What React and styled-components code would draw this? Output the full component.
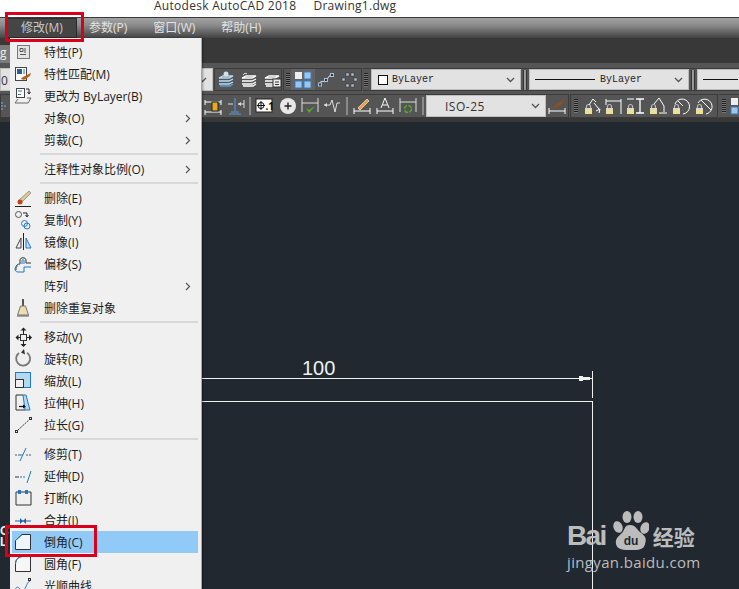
import React from "react";
import styled, { createGlobalStyle } from "styled-components";

const UI_FONT = `"Open Sans", "Noto Sans CJK SC", sans-serif`;

const GlobalStyle = createGlobalStyle`
  html, body {
    margin: 0;
    padding: 0;
    background: #212830;
  }
`;

const Page = styled.div`
  position: relative;
  display: flex;
  flex-direction: column;
  width: 739px;
  height: 589px;
  overflow: hidden;
  font-family: ${UI_FONT};
  font-size: 12px;
`;

const TitleBar = styled.div`
  display: flex;
  flex: none;
  gap: 17px;
  height: 17px;
  padding-left: 154px;
  background: #fff;
  border-bottom: 1px solid #3a3a3a;
  color: #333;
  font-size: 12px;
  letter-spacing: 0.28px;
  line-height: 11px;
`;

const MenuBar = styled.div`
  display: flex;
  align-items: center;
  flex: none;
  height: 20px;
  padding-left: 8px;
  background: linear-gradient(#a2a2a2, #8c8c8c 35%, #4e4e4e 90%, #444);
`;

const MenuTitle = styled.div`
  padding: 0 13px;
  height: 18px;
  line-height: 17px;
  box-sizing: border-box;
  color: ${(p) => (p.$active ? "#c8c8c8" : "#e2e2e2")};
  background: ${(p) => (p.$active ? "#454545" : "transparent")};
  outline: ${(p) => (p.$active ? "1px solid #2c2c2c" : "none")};
`;

const TabStrip = styled.div`
  flex: none;
  height: 25px;
  background: #383838;
`;

const Tab = styled.div`
  width: 10px;
  height: 18px;
  margin-top: 7px;
  background: #7b7b7b;
  color: #eee;
  line-height: 16px;
  overflow: hidden;
`;

const ToolRow = styled.div`
  display: flex;
  flex: none;
  gap: 1px;
  height: ${(p) => p.$h}px;
  padding: ${(p) => p.$top}px 0 ${(p) => p.$bottom}px;
  background: #555;
`;

const Panel = styled.div`
  display: flex;
  align-items: center;
  flex: none;
  box-sizing: border-box;
  width: ${(p) => p.$w}px;
  height: 100%;
  border: 1px solid #3b3b3b;
  border-left-width: ${(p) => (p.$open ? 0 : 1)}px;
  background: #555;
`;

const Grip = styled.div`
  flex: none;
  width: 4px;
  height: 14px;
  margin: 0 ${(p) => p.$after ?? 4}px 0 ${(p) => p.$before ?? 3}px;
  background: repeating-linear-gradient(#1f1f1f 0 1px, #777 1px 2px);
`;

const Slot = styled.div`
  display: flex;
  align-items: center;
  justify-content: center;
  flex: none;
  width: ${(p) => p.$w}px;
  height: 100%;
  background: ${(p) => (p.$lit ? "#636363" : "transparent")};
`;

const ToolSep = styled.div`
  flex: none;
  width: 2px;
  height: 18px;
  margin: 0 2px;
  background: #8a8a8a;
`;

const DragBar = styled.div`
  flex: none;
  width: 2px;
  height: 20px;
  margin: 0 2px;
  border: 0 solid #333;
  border-width: 0 1px;
  background: #999;
`;

const Combo = styled.div`
  display: flex;
  align-items: center;
  flex: none;
  box-sizing: border-box;
  width: ${(p) => p.$w}px;
  height: 100%;
  padding: 0 5px 0 ${(p) => p.$pad ?? 5}px;
  border: 1px solid #bdbdbd;
  background: #e2e2e2;
  color: #222;
  overflow: hidden;
`;

const ComboLabel = styled.span`
  flex: 1;
  font-family: "Liberation Mono", monospace;
  font-size: 10px;
  white-space: nowrap;
`;

const ComboPlain = styled.span`
  flex: 1;
  padding-top: 1px;
  color: #333;
  font-size: 12px;
  letter-spacing: 0.5px;
  white-space: nowrap;
`;

const Swatch = styled.span`
  flex: none;
  box-sizing: border-box;
  width: 10px;
  height: 10px;
  margin-right: 4px;
  border: 1px solid #111;
  background: #fff;
`;

const LineSample = styled.span`
  flex: none;
  width: ${(p) => p.$w}px;
  height: 1px;
  margin-right: 5px;
  background: #111;
`;

const Canvas = styled.div`
  position: relative;
  flex: 1;
  border-top: 4px solid #383838;
  background: #212830;
`;

const DrawLine = styled.div`
  position: absolute;
  left: ${(p) => p.$x}px;
  top: ${(p) => p.$y - 122}px;
  width: ${(p) => p.$w}px;
  height: ${(p) => p.$h}px;
  background: #eef0f1;
`;

const DimText = styled.div`
  position: absolute;
  left: 302px;
  top: 236px;
  color: #eef0f1;
  font-family: "Liberation Sans", sans-serif;
  font-size: 20px;
  line-height: 20px;
`;

const SideGlyph = styled.div`
  position: absolute;
  left: 0;
  top: 404px;
  color: #eee;
  font-family: "Liberation Sans", sans-serif;
  font-size: 12px;
  font-weight: 700;
  line-height: 11px;
`;

const Watermark = styled.div`
  position: absolute;
  left: 567px;
  top: 386px;
  color: #bcbcbc;
`;

const LogoRow = styled.div`
  display: flex;
  align-items: flex-end;
  height: 46px;
`;

const LogoBai = styled.span`
  font-family: "Liberation Sans", sans-serif;
  font-size: 28px;
  font-weight: 700;
  letter-spacing: -1.6px;
  line-height: 30px;
  margin-bottom: 3px;
`;

const LogoCn = styled.span`
  margin: 0 0 6px 4px;
  font-family: "Noto Sans CJK SC", sans-serif;
  font-size: 21px;
  font-weight: 700;
  line-height: 24px;
`;

const LogoUrl = styled.div`
  font-size: 15px;
  letter-spacing: 0.35px;
  line-height: 18px;
  margin-top: -1px;
`;

const Menu = styled.div`
  position: absolute;
  left: 10px;
  top: 38px;
  width: 191px;
  height: 560px;
  padding-top: 3px;
  box-sizing: border-box;
  background: #f0f0f0;
  box-shadow: 1px 0 0 #a8a8a8, 2px 0 2px rgba(0, 0, 0, 0.35);
`;

const Row = styled.div`
  display: flex;
  align-items: center;
  height: 22px;
  margin-right: 3px;
  margin-left: 2px;
  color: #1c1c1c;
  background: ${(p) => (p.$active ? "#91c9f7" : "transparent")};
`;

const IconCell = styled.div`
  display: flex;
  flex: none;
  width: 32px;
  margin-left: -1px;
  margin-right: -1px;
`;

const RowLabel = styled.span`
  flex: 1;
  padding-left: 2px;
  white-space: nowrap;
`;

const Separator = styled.div`
  height: 2px;
  margin: 2px 3px 3px 30px;
  background: #d8d8d8;
`;

const Caret = styled.svg`
  flex: none;
  margin-right: 7px;
`;

const RedBox = styled.div`
  position: absolute;
  left: ${(p) => p.$x}px;
  top: ${(p) => p.$y}px;
  width: ${(p) => p.$w}px;
  height: ${(p) => p.$h}px;
  box-sizing: border-box;
  border: 3px solid #d9001b;
`;

/* menu icons are drawn on a 24x22 grid, one per row */
const MI = ({ children }) => (
  <svg width="24" height="22" viewBox="0 0 24 22" fill="none">
    {children}
  </svg>
);

const IconProps = () => (
  <MI>
    <rect x="6.5" y="4.5" width="12" height="13" fill="#e4e4e4" stroke="#777" />
    <path d="M9 7.5h3v3H9zM14 7v5M9 13.5h6" stroke="#555" />
  </MI>
);
const IconMatch = () => (
  <MI>
    <rect x="4.5" y="4.5" width="11" height="13" fill="#fff" stroke="#444" />
    <rect x="6" y="6" width="5" height="5" fill="#2b5d93" />
    <rect x="12" y="6" width="2" height="5" fill="#9bb" />
    <path d="M10 16c2-3 5-3 6-4l4-2-1 3-3 2c-1 2-4 2-6 1z" fill="#b0621c" />
  </MI>
);
const IconChange = () => (
  <MI>
    <rect x="5.5" y="3.5" width="8" height="9" fill="#fff" stroke="#444" />
    <path d="M7 6h4M7 9.5h3" stroke="#2a70b8" />
    <path d="M15 4h3v4M16.5 7l1.5 2 1.5-2" stroke="#222" />
    <path d="M7 14l-3 4h13l3-5h-4" stroke="#666" />
  </MI>
);
const IconErase = () => (
  <MI>
    <path d="M7 14L18 4l2 2-10 10z" fill="#d8c7a5" stroke="#8d7b5c" strokeWidth=".7" />
    <circle cx="9" cy="15" r="2.5" fill="#c0441a" />
    <path d="M4 19.5h16" stroke="#222" />
  </MI>
);
const IconCopy = () => (
  <MI>
    <circle cx="7.5" cy="5.5" r="3" stroke="#555" />
    <path d="M12 4h4v3M14.5 6l1.5 2 1.5-2" stroke="#222" />
    <circle cx="13.5" cy="14.5" r="3" stroke="#1f78c8" />
    <circle cx="16" cy="17" r="3" stroke="#1f78c8" />
  </MI>
);
const IconMirror = () => (
  <MI>
    <path d="M12.5 2v17" stroke="#222" />
    <path d="M10 7v10H5z" stroke="#444" />
    <path d="M15 7v10h5z" fill="#c8e0f4" stroke="#1f78c8" />
  </MI>
);
const IconOffset = () => (
  <MI>
    <path d="M5 17v-3c0-2 2-3 4-3V7c0-3 6-3 6 0v3h5" stroke="#333" fill="none" />
    <path d="M7 19c-4 0-4-6 0-6h0M20 14h-7v5H7M11 11V8c0-2 2-2 2 0v3" stroke="#1f78c8" fill="none" />
  </MI>
);
const IconDup = () => (
  <MI>
    <path d="M11 2h2v7h-2z" fill="#555" />
    <path d="M9.5 9h5l3 9h-11z" fill="#ecdcae" stroke="#777" />
    <path d="M6 19h12" stroke="#555" />
  </MI>
);
const IconMove = () => (
  <MI>
    <rect x="9.5" y="8.5" width="6" height="6" stroke="#333" />
    <path d="M12.5 1.5l-3 3h6zM12.5 21l-3-3h6zM4.500 11.500l3-3v6zM21 11.500l-3-3v6z" fill="#222" />
    <path d="M12.500 4v4M12.500 15v4M7 11.500h2M16 11.500h3" stroke="#222" />
  </MI>
);
const IconRotate = () => (
  <MI>
    <path d="M8 5A7 7 0 1 0 16 4.800" stroke="#777" strokeWidth="1.800" />
    <path d="M13 1l-3 3.500 4 2z" fill="#333" />
  </MI>
);
const IconScale = () => (
  <MI>
    <rect x="4.500" y="2.500" width="15" height="15" fill="#b4d8ee" stroke="#1f78c8" />
    <rect x="4.500" y="9.500" width="8" height="8" fill="#f0f0f0" stroke="#333" />
  </MI>
);
const IconStretch = () => (
  <MI>
    <path d="M12 3H5v15h9" stroke="#333" />
    <path d="M12 3h3l4 15h-5z" fill="#b4d8ee" stroke="#1f78c8" />
    <path d="M8 14.500h6" stroke="#111" strokeWidth="1.200" />
    <path d="M15 14.500l-3-2v4z" fill="#111" />
  </MI>
);
const IconLengthen = () => (
  <MI>
    <rect x="4.500" y="16.500" width="2" height="2" stroke="#333" />
    <rect x="18.500" y="3.500" width="2" height="2" stroke="#333" />
    <path d="M7 16l11-10" stroke="#333" strokeDasharray="2 1" />
  </MI>
);
const IconTrim = () => (
  <MI>
    <path d="M4 12h5M15 12h6" stroke="#555" strokeDasharray="2 1" />
    <path d="M9 18l6-13" stroke="#1f78c8" />
    <path d="M9 12h3" stroke="#1f78c8" />
  </MI>
);
const IconExtend = () => (
  <MI>
    <path d="M4 12h4" stroke="#333" />
    <path d="M9 12h5" stroke="#1f78c8" strokeDasharray="2 1" />
    <path d="M16 18l4-12" stroke="#1f78c8" />
  </MI>
);
const IconBreak = () => (
  <MI>
    <path d="M8 5H5v13h15V5h-3M10 5h4" stroke="#333" />
    <rect x="7" y="3" width="3" height="4" fill="#1f78c8" />
    <rect x="14" y="3" width="3" height="4" fill="#1f78c8" />
  </MI>
);
const IconJoin = () => (
  <MI>
    <path d="M4 12h16" stroke="#1f60a8" />
    <path d="M9 9v6l3-3zM15 9v6l-3-3z" fill="#1f60a8" />
  </MI>
);
const IconChamfer = () => (
  <MI>
    <path d="M4.500 18.500V9.500L11 3.500h8.500v15z" fill="#eff6fb" stroke="#333" />
    <path d="M4.500 9.500L11 3.500" stroke="#1f78c8" />
  </MI>
);
const IconFillet = () => (
  <MI>
    <path d="M4.500 18.500V11C4.500 6 8 3.500 12 3.500h7.500v15z" fill="#f6f6f6" stroke="#333" />
    <path d="M4.500 11C4.500 6 8 3.500 12 3.500" stroke="#1f78c8" />
  </MI>
);
const IconSpline = () => (
  <MI>
    <path d="M4 15c3-8 6 4 9 0s3-8 6-9" stroke="#1f78c8" />
    <rect x="17.500" y="3.500" width="2" height="2" stroke="#333" />
  </MI>
);

/* toolbar icons */
const TI = ({ children, w = 18 }) => (
  <svg width={w} height="18" viewBox={`0 0 ${w} 18`} fill="none">
    {children}
  </svg>
);

const Lock = () => (
  <g>
    <path d="M2.500 11V9.500a2 2 0 0 1 4 0V11" stroke="#bbb" strokeWidth="1.200" />
    <rect x="1" y="11" width="7" height="6" fill="#f0e08c" />
    <rect x="1" y="11" width="7" height="2" fill="#d8d8d8" />
  </g>
);

const LayerStack = ({ blue }) => (
  <g stroke={blue ? "#bcdcf6" : "#fff"} strokeWidth="1.300">
    <path d="M1 7h10l4-2H5zM1 10h10l4-2M1 13h10l4-2" />
    <path d="M2 15h10l3-2" stroke={blue ? "#5a9bd8" : "#fff"} />
  </g>
);

const ToolIconLayers = () => (
  <TI>
    <LayerStack blue />
    <circle cx="8" cy="3" r="2.500" fill="#cfe0ee" />
  </TI>
);
const ToolIconPrev = () => (
  <TI>
    <path d="M2 4c1-2 3-2 4-1" stroke="#cfe0ee" />
    <LayerStack />
  </TI>
);
const ToolIconState = () => (
  <TI>
    <LayerStack />
    <rect x="9" y="8" width="8" height="8" fill="#eee" stroke="#333" />
    <path d="M11 11h4M11 13.500h4" stroke="#333" />
  </TI>
);
const ToolIconGrid = () => (
  <TI>
    <rect x="1" y="1" width="7" height="7" fill="#eee" />
    <rect x="10" y="1" width="7" height="7" fill="#9cc6ea" stroke="#3d7cc0" />
    <rect x="1" y="10" width="7" height="7" fill="#9cc6ea" stroke="#3d7cc0" />
    <rect x="10" y="10" width="7" height="7" fill="#9cc6ea" stroke="#3d7cc0" />
  </TI>
);
const ToolIconNodes = () => (
  <TI>
    <path d="M3 13c0-5 4-1 6-3s2-5 5-6" stroke="#eee" />
    <rect x="1.500" y="12" width="3" height="3" fill="#333" stroke="#9cc6ea" />
    <rect x="7.500" y="7.500" width="3" height="3" fill="#333" stroke="#9cc6ea" />
    <rect x="13.500" y="2.500" width="3" height="3" fill="#333" stroke="#9cc6ea" />
  </TI>
);
const ToolIconDots = () => (
  <TI>
    {[[7, 2], [12, 2], [3, 7], [15, 7], [7, 13], [12, 13]].map(([x, y]) => (
      <rect key={`${x}-${y}`} x={x} y={y} width="3" height="3" fill="#a8c4dc" stroke="#333" strokeWidth=".5" />
    ))}
  </TI>
);
const ToolIconRuler = () => (
  <TI>
    <path d="M1 3v5M17 3v5M1 5h16M1 13v5M17 13v5M1 15h16" stroke="#fff" />
    <rect x="8" y="5" width="6" height="9" fill="#e8a820" stroke="#222" />
  </TI>
);
const ToolIconBase = () => (
  <TI>
    <path d="M8 1v13M4 15h8M2 17h12" stroke="#5a9bd8" />
    <path d="M1 7h5M11 7h6M17 3v8" stroke="#ddd" />
    <path d="M11 7l3-2v4z" fill="#ddd" />
  </TI>
);
const ToolIconTol = () => (
  <TI>
    <rect x="1" y="2" width="16" height="13" fill="#fff" stroke="#222" />
    <circle cx="6" cy="8.500" r="3" stroke="#111" />
    <path d="M6 4v9M2 8.500h8" stroke="#111" />
    <text x="10.500" y="13" fontSize="10" fontWeight="700" fill="#111">.1</text>
  </TI>
);
const ToolIconCenter = () => (
  <TI>
    <circle cx="9" cy="9" r="8" fill="#e8e8e8" />
    <path d="M5.500 9h7M9 5.500v7" stroke="#222" strokeWidth="1.400" />
  </TI>
);
const ToolIconCheck = () => (
  <TI>
    <path d="M1 1v14M17 1v14M1 6h16" stroke="#ddd" />
    <path d="M5 11l3 5 6-7-6 4z" fill="#52b026" />
  </TI>
);
const ToolIconBreakLine = () => (
  <TI>
    <path d="M1 8h6l2-5 3 12 2-9h3" stroke="#ddd" />
    <path d="M1 8l3-2v4z" fill="#ddd" />
  </TI>
);
const ToolIconPencilDim = () => (
  <TI>
    <path d="M1 11v6M17 11v6M1 14h16" stroke="#fff" />
    <path d="M5 11l9-9 2 2-9 9z" fill="#e7a33a" stroke="#fff" strokeWidth=".6" />
  </TI>
);
const ToolIconTextDim = () => (
  <TI>
    <path d="M1 11v6M17 11v6M1 14h16" stroke="#fff" />
    <path d="M5 11L9 1l4 10M6.500 8h5" stroke="#fff" />
  </TI>
);
const ToolIconUpdate = () => (
  <TI>
    <path d="M1 1v14M17 1v14M1 5h16" stroke="#ddd" />
    <circle cx="9" cy="12" r="3.500" stroke="#52b026" strokeWidth="1.500" strokeDasharray="4 1.500" />
  </TI>
);
const ToolIconStyle = () => (
  <TI>
    <path d="M1 11v6M17 11v6M1 14h16" stroke="#fff" />
    <path d="M4 11c2-3 6-4 8-6l5-4-3 6c-2 2-6 4-10 4z" fill="#8c4f22" />
  </TI>
);
const LockLinear = () => (
  <TI>
    <Lock />
    <path d="M5 8l4-6 3 3M10 6l5 6M12 14l4-2-1 4" stroke="#fff" />
  </TI>
);
const LockHoriz = () => (
  <TI>
    <Lock />
    <path d="M1 2v6M16 2v15M1 4h15" stroke="#fff" />
  </TI>
);
const LockVert = () => (
  <TI>
    <Lock />
    <path d="M10 2h8M10 16h8M14 2v14" stroke="#fff" strokeWidth="1.300" />
    <path d="M1 2h7" stroke="#fff" />
  </TI>
);
const LockArc = () => (
  <TI>
    <Lock />
    <path d="M5 7l5-6 5 8v6M10 16h8" stroke="#fff" />
  </TI>
);
const LockRadius = () => (
  <TI>
    <Lock />
    <path d="M3 7a7.500 7.500 0 1 1 8 10" stroke="#fff" />
    <path d="M6 4l5 5" stroke="#fff" />
  </TI>
);
const LockDia = () => (
  <TI>
    <Lock />
    <path d="M3 6a7.500 7.500 0 1 1 8 11" stroke="#fff" />
    <path d="M6 3l10 10" stroke="#fff" />
  </TI>
);
const ClippedTool = () => (
  <svg width="8" height="10" viewBox="0 0 8 10" fill="none">
    <path d="M0 2h3M0 5h6M0 8h3" stroke="#7fb2e0" strokeDasharray="2 1" />
  </svg>
);

const Chevron = () => (
  <svg width="9" height="6" viewBox="0 0 9 6" fill="none">
    <path d="M1 1l3.500 3.500L8 1" stroke="#555" strokeWidth="1.300" />
  </svg>
);

const MENU = [
  { label: "特性(P)", Icon: IconProps },
  { label: "特性匹配(M)", Icon: IconMatch },
  { label: "更改为 ByLayer(B)", Icon: IconChange },
  { label: "对象(O)", sub: true },
  { label: "剪裁(C)", sub: true },
  { sep: true },
  { label: "注释性对象比例(O)", sub: true },
  { sep: true },
  { label: "删除(E)", Icon: IconErase },
  { label: "复制(Y)", Icon: IconCopy },
  { label: "镜像(I)", Icon: IconMirror },
  { label: "偏移(S)", Icon: IconOffset },
  { label: "阵列", sub: true },
  { label: "删除重复对象", Icon: IconDup },
  { sep: true },
  { label: "移动(V)", Icon: IconMove },
  { label: "旋转(R)", Icon: IconRotate },
  { label: "缩放(L)", Icon: IconScale },
  { label: "拉伸(H)", Icon: IconStretch },
  { label: "拉长(G)", Icon: IconLengthen },
  { sep: true },
  { label: "修剪(T)", Icon: IconTrim },
  { label: "延伸(D)", Icon: IconExtend },
  { label: "打断(K)", Icon: IconBreak },
  { label: "合并(J)", Icon: IconJoin },
  { label: "倒角(C)", Icon: IconChamfer, active: true },
  { label: "圆角(F)", Icon: IconFillet },
  { label: "光顺曲线", Icon: IconSpline },
];

const BaiduPaw = () => (
  <svg width="36" height="46" viewBox="0 0 36 46" style={{ marginLeft: 7 }}>
    <g fill="#bcbcbc">
      <ellipse cx="5" cy="19" rx="4.500" ry="6" transform="rotate(-20 5 19)" />
      <ellipse cx="14" cy="9" rx="4.500" ry="6" />
      <ellipse cx="25" cy="9" rx="4.500" ry="6" />
      <ellipse cx="32" cy="20" rx="4.500" ry="6" transform="rotate(20 32 20)" />
      <path d="M17 17c6 0 7 5 11 8s6 5 4 11c-1 6-7 6-14 6s-14 0-15-6c-1-6 3-8 6-11s2-8 8-8z" />
    </g>
    <text x="18" y="37" fontSize="12" fontWeight="700" textAnchor="middle" fill="#212830" fontFamily="Liberation Sans, sans-serif">du</text>
  </svg>
);

export default function App() {
  return (
    <Page>
      <GlobalStyle />
      <TitleBar>
        <span>Autodesk AutoCAD 2018</span>
        <span>Drawing1.dwg</span>
      </TitleBar>
      <MenuBar>
        <MenuTitle $active>修改(M)</MenuTitle>
        <MenuTitle>参数(P)</MenuTitle>
        <MenuTitle>窗口(W)</MenuTitle>
        <MenuTitle>帮助(H)</MenuTitle>
      </MenuBar>
      <TabStrip>
        <Tab>g</Tab>
      </TabStrip>
      <ToolRow $h={23} $top={5} $bottom={3}>
        <Combo $w={213} $pad={0}>
          <ComboPlain>0</ComboPlain>
          <Chevron />
        </Combo>
        <Panel $w={68}>
          <Slot $w={23}><ToolIconLayers /></Slot>
          <Slot $w={23}><ToolIconPrev /></Slot>
          <Slot $w={23}><ToolIconState /></Slot>
        </Panel>
        <Panel $w={79}>
          <Grip $before={2} $after={1} />
          <Slot $w={24} $lit><ToolIconGrid /></Slot>
          <Slot $w={22}><ToolIconNodes /></Slot>
          <Slot $w={22}><ToolIconDots /></Slot>
        </Panel>
        <Panel $w={400} $open>
          <Grip $before={1} $after={3} />
          <Combo $w={150} $pad={6}>
            <Swatch />
            <ComboLabel>ByLayer</ComboLabel>
            <Chevron />
          </Combo>
          <DragBar />
          <Combo $w={160}>
            <LineSample $w={60} />
            <ComboLabel>ByLayer</ComboLabel>
            <Chevron />
          </Combo>
          <DragBar />
          <Combo $w={60}>
            <LineSample $w={35} />
          </Combo>
        </Panel>
      </ToolRow>
      <ToolRow $h={24} $top={0} $bottom={0}>
        <Panel $w={569}>
          <Slot $w={8}><ClippedTool /></Slot>
          <Slot $w={192} />
          <Slot $w={23}><ToolIconRuler /></Slot>
          <Slot $w={23}><ToolIconBase /></Slot>
          <ToolSep />
          <Slot $w={22}><ToolIconTol /></Slot>
          <Slot $w={26}><ToolIconCenter /></Slot>
          <Slot $w={18}><ToolIconCheck /></Slot>
          <Slot $w={25}><ToolIconBreakLine /></Slot>
          <ToolSep />
          <Slot $w={24}><ToolIconPencilDim /></Slot>
          <Slot $w={22}><ToolIconTextDim /></Slot>
          <Slot $w={24}><ToolIconUpdate /></Slot>
          <ToolSep />
          <Combo $w={120} $pad={18}>
            <ComboPlain>ISO-25</ComboPlain>
            <Chevron />
          </Combo>
          <Slot $w={21}><ToolIconStyle /></Slot>
        </Panel>
        <Panel $w={148}>
          <Grip />
          <Slot $w={22}><LockLinear /></Slot>
          <Slot $w={19}><LockHoriz /></Slot>
          <Slot $w={24}><LockVert /></Slot>
          <Slot $w={22}><LockArc /></Slot>
          <Slot $w={23}><LockRadius /></Slot>
          <Slot $w={23}><LockDia /></Slot>
        </Panel>
        <Panel $w={30} $open>
          <Grip />
          <Slot $w={18}><ToolIconGrid /></Slot>
        </Panel>
      </ToolRow>
      <Canvas>
        <DimText>100</DimText>
        <DrawLine $x={200} $y={378} $w={392} $h={1} />
        <DrawLine $x={579} $y={376} $w={4} $h={5} />
        <DrawLine $x={583} $y={377} $w={7} $h={3} />
        <DrawLine $x={592} $y={371} $w={1} $h={27} />
        <DrawLine $x={200} $y={401} $w={393} $h={1} />
        <DrawLine $x={592} $y={401} $w={1} $h={190} />
        <SideGlyph>
          C
          <br />L
        </SideGlyph>
        <Watermark>
          <LogoRow>
            <LogoBai>Bai</LogoBai>
            <BaiduPaw />
            <LogoCn>经验</LogoCn>
          </LogoRow>
          <LogoUrl>jingyan.baidu.com</LogoUrl>
        </Watermark>
      </Canvas>
      <Menu>
        {MENU.map((item, i) =>
          item.sep ? (
            <Separator key={i} />
          ) : (
            <Row key={i} $active={item.active}>
              <IconCell>{item.Icon && <item.Icon />}</IconCell>
              <RowLabel>{item.label}</RowLabel>
              {item.sub && (
                <Caret width="6" height="9" viewBox="0 0 6 9" fill="none">
                  <path d="M1 1l3.500 3.500L1 8" stroke="#555" strokeWidth="1.200" />
                </Caret>
              )}
            </Row>
          )
        )}
      </Menu>
      <RedBox $x={5} $y={12} $w={79} $h={30} />
      <RedBox $x={5} $y={525} $w={92} $h={32} />
    </Page>
  );
}
